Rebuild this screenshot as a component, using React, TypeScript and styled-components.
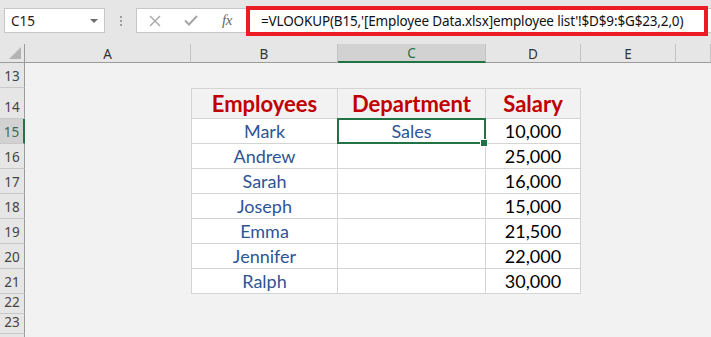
import React from "react";
import styled, { createGlobalStyle, css } from "styled-components";

const GlobalStyle = createGlobalStyle`
  html, body {
    margin: 0;
    padding: 0;
    background: #f2f2f2;
    overflow: hidden;
  }
`;

const UI_FONT = `"Noto Sans", "Open Sans", sans-serif`;
const CELL_FONT = `Lato, "Liberation Sans", sans-serif`;
const GREEN = "#217346";

const Window = styled.div`
  width: 711px;
  height: 337px;
  overflow: hidden;
  background: #f2f2f2;
`;

const FormulaBar = styled.div`
  height: 44px;
  background: #e6e6e6;
  display: flex;
  align-items: flex-start;
  padding: 8px 0 0 4px;
  box-sizing: border-box;
`;

const NameBox = styled.div`
  width: 101px;
  height: 25px;
  box-sizing: border-box;
  background: #fff;
  border: 1px solid #c6c6c6;
  display: flex;
  align-items: center;
  justify-content: space-between;
  padding: 0 6px 0 6px;
  font-family: ${UI_FONT};
  font-size: 13.5px;
  color: #222;
`;

const DropArrow = styled.span`
  width: 0;
  height: 0;
  border-left: 4px solid transparent;
  border-right: 4px solid transparent;
  border-top: 4px solid #6d6d6d;
`;

const Grip = styled.div`
  width: 31px;
  height: 25px;
  display: flex;
  flex-direction: column;
  align-items: center;
  justify-content: center;
  gap: 2px;
  span {
    width: 2px;
    height: 2px;
    background: #9d9d9d;
  }
`;

const FormulaPanel = styled.div`
  flex: 1;
  height: 25px;
  box-sizing: border-box;
  background: #fff;
  border: 1px solid #c6c6c6;
  border-right: none;
  display: flex;
  align-items: center;
`;

const IconSlot = styled.div<{ $w: number }>`
  width: ${(p) => p.$w}px;
  height: 23px;
  display: flex;
  align-items: center;
  justify-content: center;
  flex-shrink: 0;
`;

const Fx = styled.span`
  font-family: "Liberation Serif", serif;
  font-style: italic;
  font-size: 15px;
  color: #6a6a6a;
  letter-spacing: -0.5px;
`;

const FormulaInput = styled.div`
  margin-left: 5px;
  width: 454px;
  height: 22px;
  box-sizing: border-box;
  outline: 4px solid #ed1c24;
  display: flex;
  align-items: center;
  padding-left: 11px;
  font-family: ${UI_FONT};
  font-size: 13.5px;
  letter-spacing: -0.15px;
  color: #111;
  white-space: nowrap;
`;

const Sheet = styled.div`
  display: grid;
  grid-template-columns: 25px 166px 147px 148px 95px 95px 1fr;
  grid-template-rows: 19px 25px 31px repeat(7, 25px) 20px 20px 20px;
`;

const Corner = styled.div`
  background: #e6e6e6;
  border-right: 1px solid #9b9b9b;
  border-bottom: 1px solid #9b9b9b;
  box-sizing: border-box;
  position: relative;
  &::after {
    content: "";
    position: absolute;
    right: 3px;
    bottom: 3px;
    width: 0;
    height: 0;
    border-left: 12px solid transparent;
    border-bottom: 12px solid #b4b4b4;
  }
`;

const ColHead = styled.div<{ $active?: boolean }>`
  background: ${(p) => (p.$active ? "#d2d2d2" : "#e6e6e6")};
  border-right: 1px solid #c3c3c3;
  border-bottom: ${(p) => (p.$active ? `2px solid ${GREEN}` : "1px solid #9b9b9b")};
  box-sizing: border-box;
  display: flex;
  align-items: center;
  justify-content: center;
  font-family: ${UI_FONT};
  font-size: 13.5px;
  color: ${(p) => (p.$active ? GREEN : "#333")};
  padding-top: 1px;
`;

const RowHead = styled.div<{ $active?: boolean }>`
  background: ${(p) => (p.$active ? "#d2d2d2" : "#e6e6e6")};
  border-bottom: 1px solid #c8c8c8;
  border-right: ${(p) => (p.$active ? `2px solid ${GREEN}` : "1px solid #9b9b9b")};
  box-sizing: border-box;
  display: flex;
  align-items: flex-end;
  justify-content: center;
  padding-bottom: 2px;
  font-family: ${UI_FONT};
  font-size: 13.5px;
  color: ${(p) => (p.$active ? "#3d6b52" : "#444")};
`;

type CellKind = "empty" | "head" | "name" | "dept" | "num";

const Cell = styled.div<{ $kind: CellKind; $left?: boolean; $top?: boolean; $selected?: boolean }>`
  box-sizing: border-box;
  position: relative;
  display: flex;
  align-items: flex-end;
  justify-content: center;
  font-family: ${CELL_FONT};
  white-space: nowrap;
  ${(p) =>
    p.$kind !== "empty" &&
    css`
      background: ${p.$kind === "head" ? "#f2f2f2" : "#fff"};
      border-right: 1px solid #d4d4d4;
      border-bottom: 1px solid #d4d4d4;
      ${p.$left && "border-left: 1px solid #d4d4d4;"}
      ${p.$top && "border-top: 1px solid #d4d4d4;"}
    `}
  ${(p) =>
    p.$kind === "head" &&
    css`
      color: #c00000;
      font-weight: 700;
      font-size: 22px;
      padding-bottom: 1px;
    `}
  ${(p) =>
    (p.$kind === "name" || p.$kind === "dept") &&
    css`
      color: #2f5496;
      font-size: 18px;
      padding-bottom: 1px;
    `}
  ${(p) =>
    p.$kind === "num" &&
    css`
      color: #000;
      font-size: 18px;
      padding-bottom: 1px;
    `}
  ${(p) =>
    p.$selected &&
    css`
      &::after {
        content: "";
        position: absolute;
        left: -1px;
        top: -1px;
        right: -1px;
        bottom: -1px;
        border: 2px solid ${GREEN};
      }
      &::before {
        content: "";
        position: absolute;
        right: -3px;
        bottom: -4px;
        width: 6px;
        height: 6px;
        background: ${GREEN};
        border: 1px solid #fff;
        z-index: 2;
      }
    `}
`;

const CloseIcon = () => (
  <svg width="12" height="12" viewBox="0 0 12 12">
    <path d="M1 1 L11 11 M11 1 L1 11" stroke="#a6a6a6" strokeWidth="1.4" fill="none" />
  </svg>
);

const CheckIcon = () => (
  <svg width="14" height="11" viewBox="0 0 14 11">
    <path d="M1 5.5 L5 9.5 L13 1" stroke="#a6a6a6" strokeWidth="2" fill="none" />
  </svg>
);

const employees = [
  { name: "Mark", dept: "Sales", salary: "10,000" },
  { name: "Andrew", dept: "", salary: "25,000" },
  { name: "Sarah", dept: "", salary: "16,000" },
  { name: "Joseph", dept: "", salary: "15,000" },
  { name: "Emma", dept: "", salary: "21,500" },
  { name: "Jennifer", dept: "", salary: "22,000" },
  { name: "Ralph", dept: "", salary: "30,000" },
];

const columns = ["A", "B", "C", "D", "E", ""];

export default function App() {
  return (
    <Window>
      <GlobalStyle />
      <FormulaBar>
        <NameBox>
          C15
          <DropArrow />
        </NameBox>
        <Grip>
          <span />
          <span />
          <span />
        </Grip>
        <FormulaPanel>
          <IconSlot $w={36}>
            <CloseIcon />
          </IconSlot>
          <IconSlot $w={36}>
            <CheckIcon />
          </IconSlot>
          <IconSlot $w={36}>
            <Fx>fx</Fx>
          </IconSlot>
          <FormulaInput>=VLOOKUP(B15,'[Employee Data.xlsx]employee list'!$D$9:$G$23,2,0)</FormulaInput>
        </FormulaPanel>
      </FormulaBar>

      <Sheet>
        <Corner />
        {columns.map((c, i) => (
          <ColHead key={i} $active={c === "C"}>
            {c}
          </ColHead>
        ))}

        <RowHead>13</RowHead>
        {columns.map((_, i) => (
          <Cell key={i} $kind="empty" />
        ))}

        <RowHead>14</RowHead>
        <Cell $kind="empty" />
        <Cell $kind="head" $left $top>Employees</Cell>
        <Cell $kind="head" $top>Department</Cell>
        <Cell $kind="head" $top>Salary</Cell>
        <Cell $kind="empty" />
        <Cell $kind="empty" />

        {employees.map((e, i) => (
          <React.Fragment key={e.name}>
            <RowHead $active={i === 0}>{15 + i}</RowHead>
            <Cell $kind="empty" />
            <Cell $kind="name" $left>{e.name}</Cell>
            <Cell $kind="dept" $selected={i === 0}>{e.dept}</Cell>
            <Cell $kind="num">{e.salary}</Cell>
            <Cell $kind="empty" />
            <Cell $kind="empty" />
          </React.Fragment>
        ))}

        {["22", "23", ""].map((n, r) => (
          <React.Fragment key={r}>
            <RowHead>{n}</RowHead>
            {columns.map((_, i) => (
              <Cell key={i} $kind="empty" />
            ))}
          </React.Fragment>
        ))}
      </Sheet>
    </Window>
  );
}
